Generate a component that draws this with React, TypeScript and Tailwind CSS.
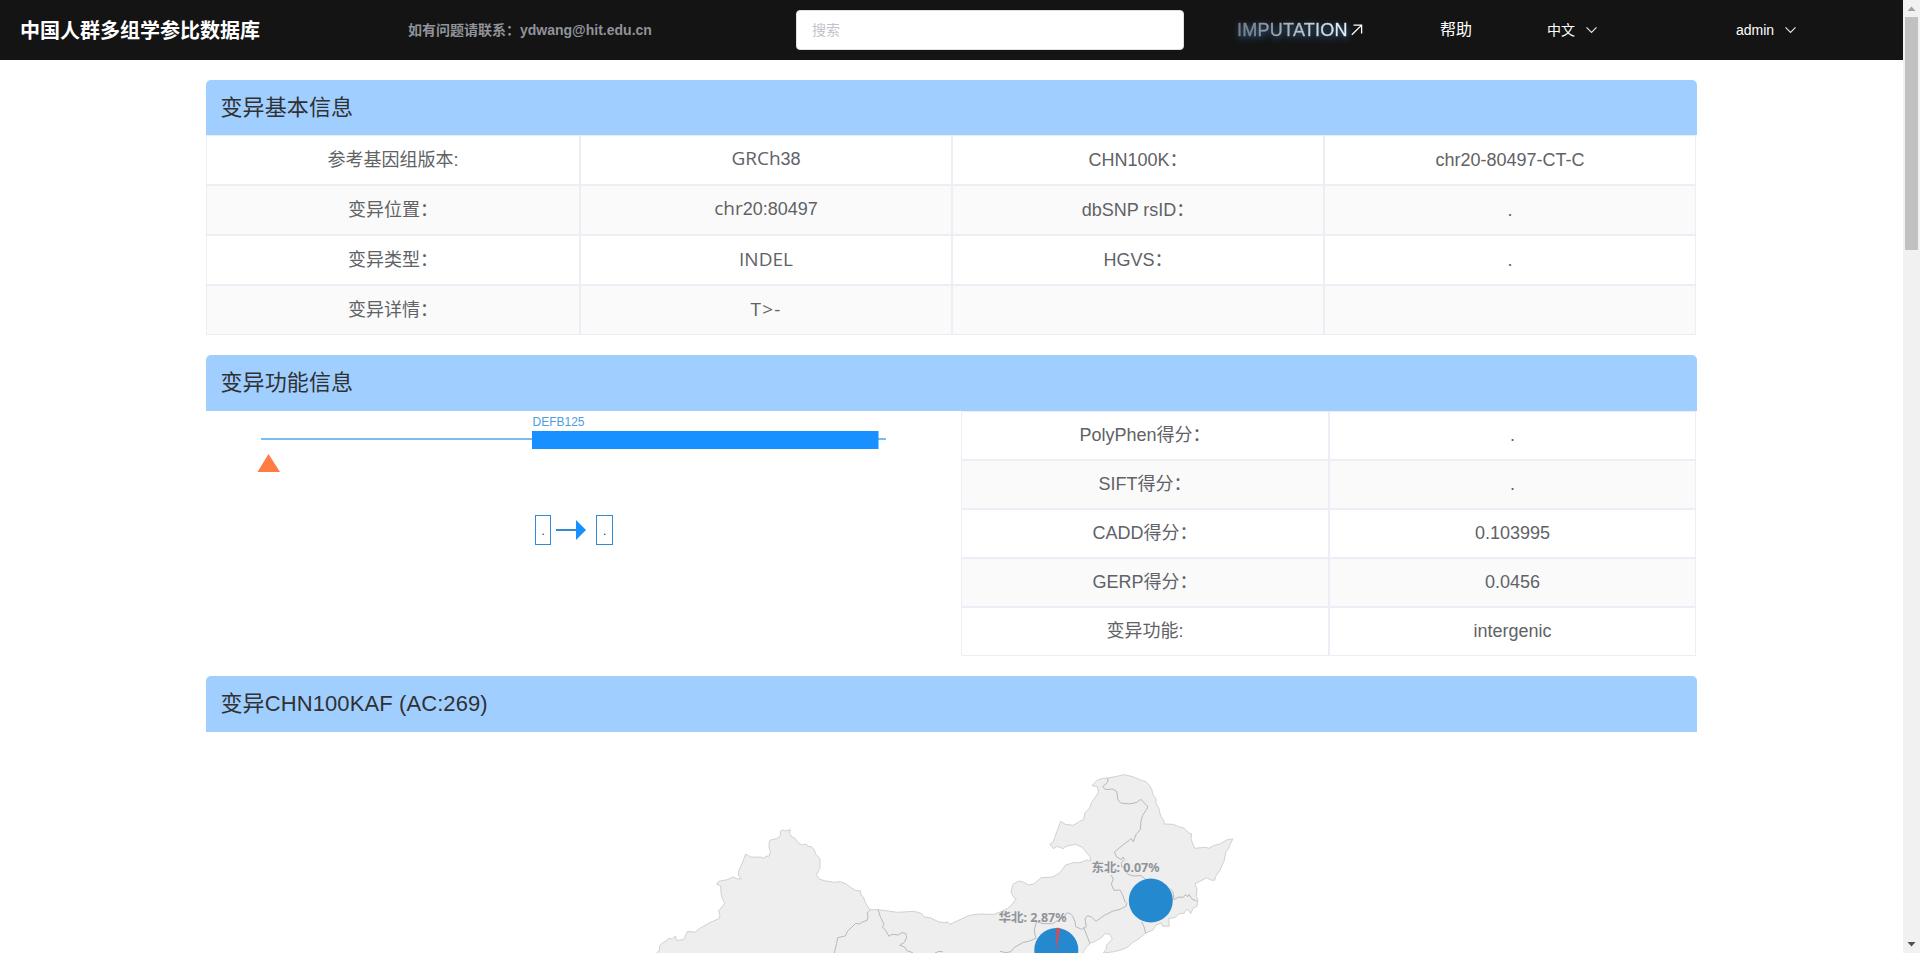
import type { ReactNode } from 'react';

const latin = "text-[19px] font-['Open_Sans','Noto_Sans_CJK_SC',sans-serif]";

function Chevron() {
  return (
    <svg width="12" height="8" viewBox="0 0 12 8" fill="none" stroke="#e4e4e4" strokeWidth="1.2">
      <path d="M.5 1.3 5.5 6.3 10.5 1.3" />
    </svg>
  );
}

function TopBar() {
  return (
    <header className="flex h-[60px] items-center bg-[#141414] text-white">
      <h1 className="w-[388px] pl-5 pt-0.5 text-xl font-bold whitespace-nowrap">中国人群多组学参比数据库</h1>
      <p className="w-[388px] pl-5 text-sm font-bold whitespace-nowrap text-[#909399]">
        如有问题请联系：ydwang@hit.edu.cn
      </p>
      <div className="w-[461px] pl-5">
        <input
          className="block h-10 w-[388px] rounded border border-[#dcdfe6] bg-white px-[15px] text-sm outline-none placeholder:text-[#c0c4cc]"
          placeholder="搜索"
        />
      </div>
      <a className="flex w-[203px] items-center text-lg">
        <span className="bg-gradient-to-r from-[#777b80] to-[#f2f6fa] bg-clip-text tracking-[.25px] text-transparent drop-shadow-[1px_2px_3px_#2b639a] [-webkit-text-stroke:.35px_transparent]">
          IMPUTATION
        </span>
        <svg className="ml-[3px]" width="12" height="12" viewBox="0 0 12 12" fill="none" stroke="#fff" strokeWidth="1.3">
          <path d="M.8 10.8 10.4 1.4M2.5 1.2h8.1v8.2" />
        </svg>
      </a>
      <a className="w-[107px] text-base">帮助</a>
      <a className="flex w-[189px] items-center gap-[11px] text-sm">
        中文
        <Chevron />
      </a>
      <a className="flex items-center gap-[11px] text-sm">
        admin
        <Chevron />
      </a>
    </header>
  );
}

function SectionTitle({ children, first }: { children: ReactNode; first?: boolean }) {
  return (
    <h2
      className={
        (first ? 'h-[55px]' : 'h-[56px] pb-0.5') +
        ' flex items-center rounded-t-[5px] bg-[#a0cfff] pl-[14.5px] text-[22px] tracking-[.1px] text-[#303133]'
      }
    >
      {children}
    </h2>
  );
}

function Cell({ children, shaded, lift = '' }: { children?: ReactNode; shaded: boolean; lift?: string }) {
  return (
    <div
      className={
        'flex items-center justify-center border border-[#ebeef5] text-lg leading-6 text-[#606266] ' +
        (shaded ? 'bg-[#fafafa] ' : 'bg-white ') +
        lift
      }
    >
      {children}
    </div>
  );
}

const basics: ReactNode[][] = [
  ['参考基因组版本:', <span><span className={latin}>GRCh</span>38</span>, 'CHN100K：', 'chr20-80497-CT-C'],
  ['变异位置：', <span><span className={latin}>chr</span>20:80497</span>, 'dbSNP rsID：', '.'],
  ['变异类型：', <span className={latin}>INDEL</span>, 'HGVS：', '.'],
  ['变异详情：', <span className={latin + ' tracking-[1.2px]'}>T&gt;-</span>, '', ''],
];

const scores = [
  ['PolyPhen得分：', '.'],
  ['SIFT得分：', '.'],
  ['CADD得分：', '0.103995'],
  ['GERP得分：', '0.0456'],
  ['变异功能:', 'intergenic'],
];

function GeneTrack() {
  return (
    <svg className="block" width="755" height="245" viewBox="206 411 755 245">
      <path d="M261 439H886" stroke="#76bdf0" strokeWidth="2" />
      <rect x="532" y="431" width="346.5" height="18" fill="#1890ff" />
      <text x="532.5" y="426" fontSize="12" fill="#4f9ddb">DEFB125</text>
      <path d="M268.5 454 280 472H257.5Z" fill="#ff7d45" />
      <g fill="none" stroke="#348ad0">
        <rect x="535.5" y="515.5" width="15" height="29" />
        <rect x="596.5" y="515.5" width="16" height="29" />
      </g>
      <path d="M556 530H577" stroke="#348ad0" strokeWidth="2" />
      <path d="M576 520 586 530 576 540Z" fill="#1890ff" />
      <text x="541.5" y="535" fontSize="12" fill="#303133">.</text>
      <text x="603" y="535" fontSize="12" fill="#303133">.</text>
    </svg>
  );
}

const mainland =
  'M28 600L50 578 58 573 60 556 68 548 80 543 86 535 97 537 106 528 109 541 130 539 135 531 142 514 165 517 180 505 205 490 237 476 240 466 236 452 249 438 254 430 247 415 243 400 242 377 230 373 236 364 262 359 280 351 290 356 304 357 295 345 297 330 306 312 317 282 332 291 368 292 370 296 378 289 388 288 391 275 387 262 388 243 395 239 410 236 421 228 421 214 428 210 436 213 451 209 449 221 458 232 466 236 472 246 486 255 498 252 503 259 514 260 522 268 527 282 540 296 540 325 529 344 537 357 556 363 583 367 602 365 618 372 632 382 647 392 661 392 663 405 670 411 677 430 690 449 714 449 773 457 823 454 845 461 852 471 870 473 895 485 920 489 920 484 930 493 945 486 988 466 1020 462 1062 463 1083 455 1102 446 1115 435 1129 416 1121 412 1113 396 1119 373 1136 363 1150 366 1165 375 1182 372 1203 353 1239 351 1259 339 1277 315 1300 308 1320 308 1340 300 1352 303 1350 290 1342 281 1327 262 1306 253 1278 259 1270 266 1252 259 1240 266 1230 252 1240 246 1245 230 1262 184 1276 193 1300 196 1318 185 1331 178 1335 158 1349 144 1354 128 1369 108 1376 96 1372 80 1356 77 1370 62 1387 55 1405 54 1440 47 1453 44 1470 48 1483 52 1504 61 1518 65 1529 77 1536 90 1538 103 1548 116 1548 130 1556 144 1562 168 1571 181 1572 192 1600 193 1616 200 1633 205 1645 218 1655 222 1653 236 1657 248 1664 265 1696 262 1707 265 1720 257 1740 252 1762 239 1779 237 1771 251 1766 266 1758 275 1752 303 1740 330 1727 349 1724 361 1712 360 1700 353 1678 365 1665 371 1671 389 1669 409 1674 420 1671 439 1660 444 1652 461 1645 448 1637 452 1632 460 1617 461 1609 470 1600 474 1586 475 1588 499 1567 498 1563 488 1548 496 1539 510 1514 521 1497 536 1477 548 1462 562 1445 569 1423 575 1390 579 1398 568 1400 555 1417 537 1410 523 1395 520 1386 532 1369 542 1352 550 1340 560 1330 575 1330 600Z';

const borders = [
  'M690 451L682 459 684 470 681 481 665 487 658 492 647 490 636 501 623 513 616 528 593 533 590 550 583 579 580 600',
  'M714 449L722 473 732 492 727 500 738 513 747 529 756 523 775 525 785 518 797 520 800 532 793 547 779 556 794 561 801 572 818 578 830 590',
  'M1404 54L1403 67 1388 80 1398 89 1417 87 1430 94 1434 120 1442 129 1468 132 1492 127 1498 120 1504 119 1524 141 1508 166 1503 182 1501 208 1488 224 1480 245 1474 236 1450 254 1423 276 1430 291 1444 299 1449 291 1454 298 1444 308 1445 321 1450 320 1464 343 1480 348 1503 347 1517 358 1530 360',
  'M1413 345L1420 357 1414 373 1422 391 1440 390 1447 403 1455 425 1460 430 1458 439 1440 448 1417 454 1393 466 1368 484 1354 471 1342 467 1335 477 1339 500 1325 508 1307 500 1305 485 1298 468 1290 460 1280 459 1272 470 1238 491 1209 491 1190 485 1183 508 1185 525 1188 535 1166 544 1150 547 1122 563 1113 575 1098 578 1080 574',
  'M1590 385L1599 395 1602 419 1617 411 1630 412 1636 404 1644 410 1647 403 1656 417 1671 424',
  'M1505 485L1512 500 1517 521',
  'M1331 502L1342 530 1350 551',
  'M885 579L897 574 908 575',
];

function RegionMap() {
  return (
    <svg className="block" width="1491" height="221" viewBox="206 732 1491 221">
      <g transform="translate(640 760) scale(.33333)" strokeLinejoin="round">
        <path d={mainland} fill="#eee" stroke="#d0d0d0" strokeWidth="3" />
        <g fill="none" stroke="#b8b8b8" strokeWidth="3">
          {borders.map((d) => (
            <path key={d} d={d} />
          ))}
        </g>
      </g>
      <circle cx="1150.8" cy="900.5" r="22" fill="#2589d0" />
      <circle cx="1056.3" cy="950" r="22" fill="#2589d0" />
      <path d="M1056.3 950V928A22 22 0 0 1 1060.2 928.4Z" fill="#c9515a" stroke="#c9515a" strokeWidth=".4" />
      <g className="font-['Noto_Sans','Noto_Sans_CJK_SC',sans-serif] font-bold" fontSize="12" fill="#909399">
        <text x="1091.5" y="871.5" textLength="68" lengthAdjust="spacingAndGlyphs">东北: 0.07%</text>
        <text x="998.5" y="921.5" textLength="68" lengthAdjust="spacingAndGlyphs">华北: 2.87%</text>
      </g>
    </svg>
  );
}

function ScrollBar() {
  return (
    <div className="flex h-[953px] w-[17px] flex-col items-center bg-[#f1f1f1]">
      <svg width="17" height="17" fill="#a3a3a3">
        <path d="M8.5 6.5 12.5 11H4.5Z" />
      </svg>
      <div className="h-[233px] w-[13px] bg-[#c1c1c1]" />
      <svg className="mt-auto" width="17" height="17" fill="#505050">
        <path d="M8.5 10.5 12.5 6H4.5Z" />
      </svg>
    </div>
  );
}

export default function App() {
  return (
    <div className="flex h-[953px] w-[1920px] overflow-hidden bg-white font-['Liberation_Sans','Noto_Sans_CJK_SC',sans-serif]">
      <div className="w-[1903px]">
        <TopBar />
        <main className="mt-5 ml-[206px] w-[1491px]">
          <section>
            <SectionTitle first>变异基本信息</SectionTitle>
            <div className="grid w-[1490px] auto-rows-[50px] grid-cols-[374px_372px_372px_372px]">
              {basics.map((row, r) =>
                row.map((value, c) => (
                  <Cell key={r + '-' + c} shaded={r % 2 === 1} lift={c === 1 ? 'pb-[3px]' : ''}>
                    {value}
                  </Cell>
                )),
              )}
            </div>
          </section>
          <section className="mt-5">
            <SectionTitle>变异功能信息</SectionTitle>
            <div className="flex">
              <GeneTrack />
              <div className="grid w-[735px] auto-rows-[49px] grid-cols-[368px_367px]">
                {scores.map((row, r) =>
                  row.map((value, c) => (
                    <Cell key={r + '-' + c} shaded={r % 2 === 1} lift="pb-0.5">
                      {value}
                    </Cell>
                  )),
                )}
              </div>
            </div>
          </section>
          <section className="mt-5">
            <SectionTitle>变异CHN100KAF (AC:269)</SectionTitle>
            <RegionMap />
          </section>
        </main>
      </div>
      <ScrollBar />
    </div>
  );
}
